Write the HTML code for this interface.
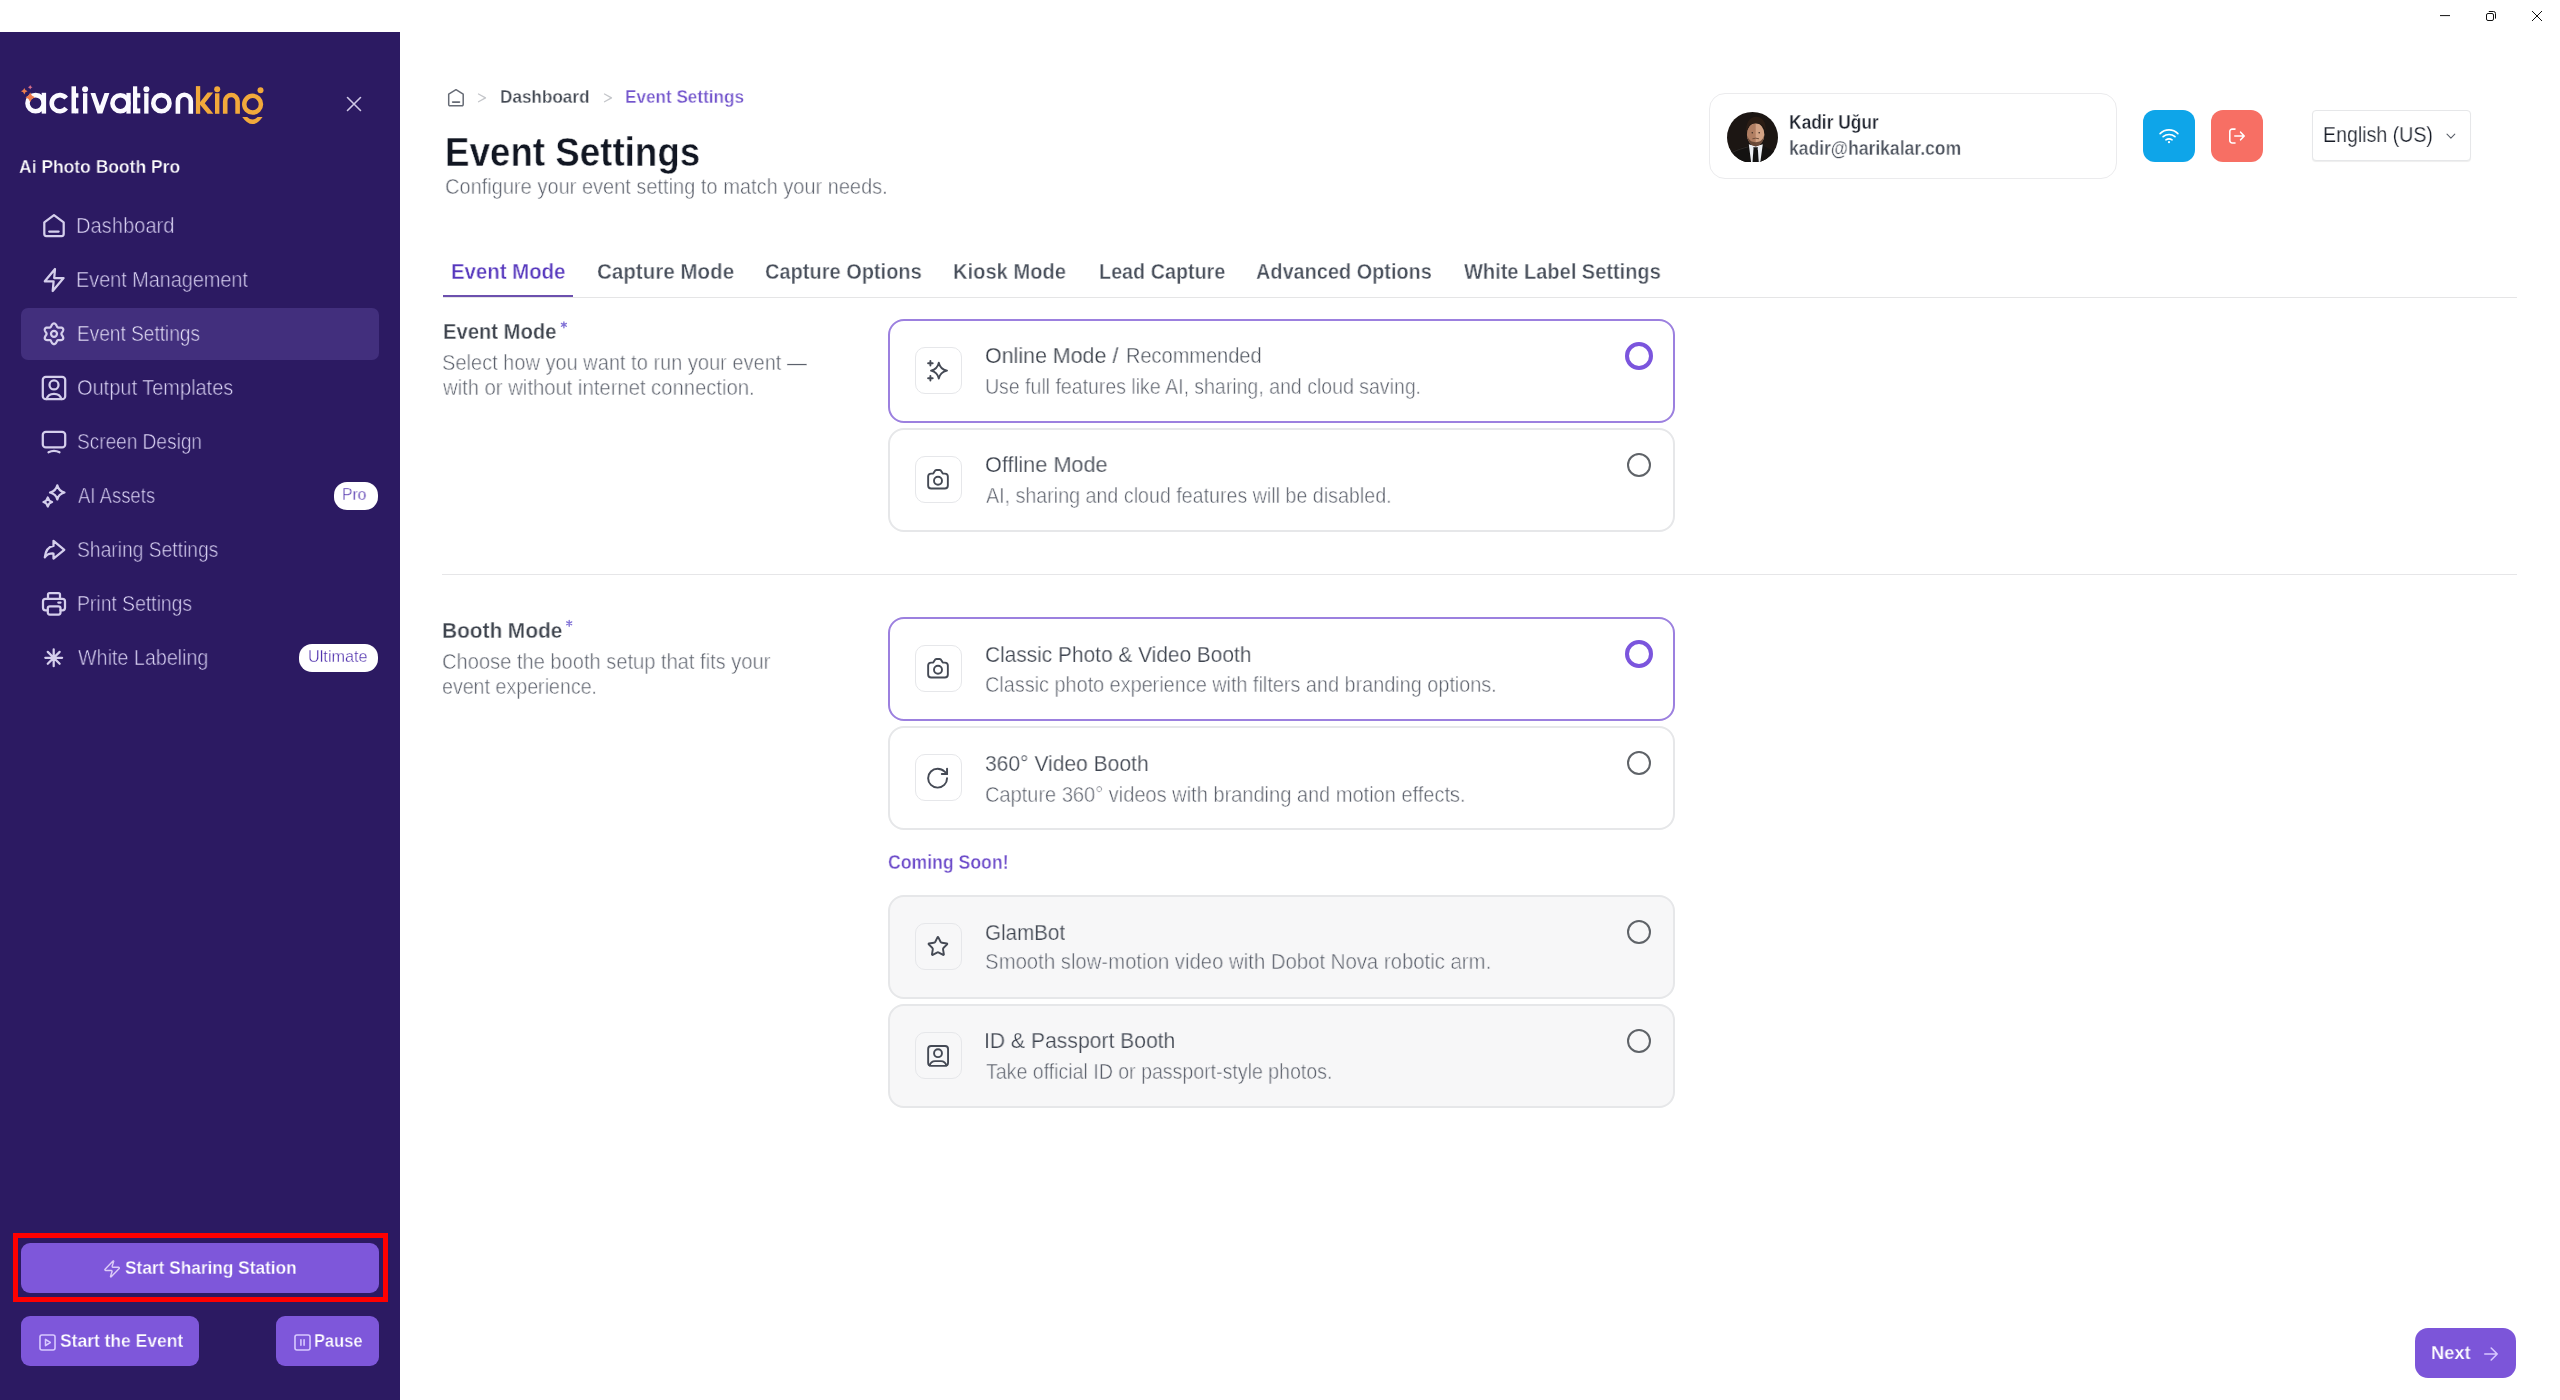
<!DOCTYPE html>
<html><head><meta charset="utf-8"><title>Event Settings</title>
<style>
html,body{margin:0;padding:0;width:2560px;height:1400px;overflow:hidden;background:#fff;}
body{position:relative;font-family:"Liberation Sans",sans-serif;}
.r{position:absolute;display:block;}
.t{position:absolute;white-space:nowrap;transform-origin:0 0;will-change:transform;}
</style></head><body>
<div class="r" style="left:0.0px;top:0.0px;width:2560.0px;height:32.0px;background:#ffffff;border-radius:0.0px;box-sizing:border-box;"></div>
<svg class="r" style="left:2420px;top:0" width="140" height="32" viewBox="2420 0 140 32" fill="none" stroke="#111" stroke-width="1"><path d="M2440 15.6h10"/><rect x="2486.5" y="13.5" width="7" height="7" rx="1.5"/><path d="M2488.8 11.5H2493.5a2 2 0 0 1 2 2V18.6"/><path d="M2532 11l10 10M2542 11l-10 10"/></svg>
<div class="r" style="left:0.0px;top:32.0px;width:400.0px;height:1368.0px;background:#2c1a62;border-radius:0.0px;box-sizing:border-box;"></div>
<div class="r" style="left:21.0px;top:308.0px;width:358.0px;height:52.0px;background:#422f7d;border-radius:7.0px;box-sizing:border-box;"></div>
<div class="r" style="left:334.0px;top:482.0px;width:44.0px;height:28.0px;background:#ffffff;border-radius:13.0px;box-sizing:border-box;"></div>
<div class="r" style="left:299.0px;top:644.0px;width:79.0px;height:28.0px;background:#ffffff;border-radius:13.0px;box-sizing:border-box;"></div>
<svg class="r" style="left:344.0px;top:94.0px;" width="20.0" height="20.0" viewBox="0 0 20 20" fill="none" stroke="#cfc8e6" stroke-width="1.6" stroke-linecap="round" stroke-linejoin="round"><path d="M3.5 3.5l13 13M16.5 3.5l-13 13"/></svg>
<div class="r" style="left:13.2px;top:1233.1px;width:374.4px;height:69.2px;background:transparent;border:5.6px solid #ff0000;border-radius:0.0px;box-sizing:border-box;"></div>
<div class="r" style="left:21.0px;top:1243.0px;width:358.0px;height:50.0px;background:#7e57da;border-radius:9.0px;box-sizing:border-box;"></div>
<div class="r" style="left:21.0px;top:1316.0px;width:178.0px;height:50.0px;background:#7e57da;border-radius:9.0px;box-sizing:border-box;"></div>
<div class="r" style="left:276.0px;top:1316.0px;width:103.0px;height:50.0px;background:#7e57da;border-radius:9.0px;box-sizing:border-box;"></div>
<svg class="r" style="left:0;top:0" width="400" height="700" viewBox="0 0 400 700" fill="none" stroke="#d5cfec" stroke-width="2.25" stroke-linecap="round" stroke-linejoin="round"><path d="M44.3 222.3L54 215.2l9.7 7.1V234a2 2 0 0 1-2 2H46.3a2 2 0 0 1-2-2z"/><path d="M49.2 231.5h9.4"/><path d="M55 269L44.8 281.3h8.8L52.7 291l10.9-13h-9.4z"/><path d="M61.40 333.80 L61.46 334.19 L61.64 334.60 L61.92 335.05 L62.25 335.55 L62.60 336.10 L62.91 336.69 L63.13 337.31 L63.24 337.91 L63.20 338.49 L63.01 339.00 L62.66 339.42 L62.18 339.74 L61.60 339.96 L60.96 340.07 L60.29 340.09 L59.65 340.07 L59.05 340.03 L58.52 340.02 L58.07 340.07 L57.70 340.21 L57.39 340.46 L57.13 340.82 L56.87 341.29 L56.61 341.82 L56.30 342.40 L55.95 342.96 L55.53 343.46 L55.06 343.86 L54.54 344.11 L54.00 344.20 L53.46 344.11 L52.94 343.86 L52.47 343.46 L52.05 342.96 L51.70 342.40 L51.39 341.82 L51.13 341.29 L50.87 340.82 L50.61 340.46 L50.30 340.21 L49.93 340.07 L49.48 340.02 L48.95 340.03 L48.35 340.07 L47.71 340.09 L47.04 340.07 L46.40 339.96 L45.82 339.74 L45.34 339.42 L44.99 339.00 L44.80 338.49 L44.76 337.91 L44.87 337.31 L45.09 336.69 L45.40 336.10 L45.75 335.55 L46.08 335.05 L46.36 334.60 L46.54 334.19 L46.60 333.80 L46.54 333.41 L46.36 333.00 L46.08 332.55 L45.75 332.05 L45.40 331.50 L45.09 330.91 L44.87 330.29 L44.76 329.69 L44.80 329.11 L44.99 328.60 L45.34 328.18 L45.82 327.86 L46.40 327.64 L47.04 327.53 L47.71 327.51 L48.35 327.53 L48.95 327.57 L49.48 327.58 L49.93 327.53 L50.30 327.39 L50.61 327.14 L50.87 326.78 L51.13 326.31 L51.39 325.78 L51.70 325.20 L52.05 324.64 L52.47 324.14 L52.94 323.74 L53.46 323.49 L54.00 323.40 L54.54 323.49 L55.06 323.74 L55.53 324.14 L55.95 324.64 L56.30 325.20 L56.61 325.78 L56.87 326.31 L57.13 326.78 L57.39 327.14 L57.70 327.39 L58.07 327.53 L58.52 327.58 L59.05 327.57 L59.65 327.53 L60.29 327.51 L60.96 327.53 L61.60 327.64 L62.18 327.86 L62.66 328.18 L63.01 328.60 L63.20 329.11 L63.24 329.69 L63.13 330.29 L62.91 330.91 L62.60 331.50 L62.25 332.05 L61.92 332.55 L61.64 333.00 L61.46 333.41Z"/><circle cx="54" cy="333.8" r="3"/><rect x="42.8" y="376.8" width="22.4" height="22.4" rx="3"/><circle cx="54" cy="384.9" r="4.5"/><path d="M46.6 399c.9-3.4 3.9-5.2 7.4-5.2s6.5 1.8 7.4 5.2"/><rect x="42.8" y="431.8" width="22.4" height="15.6" rx="3"/><path d="M48.5 452.3q5.5-2.8 11 0"/><path d="M57.3 485.3q1.2 5.6 7.2 7.2-6 1.6-7.2 6.9-1.2-5.3-7.3-6.9 6.1-1.6 7.3-7.2z"/><path d="M47.8 497.5q.9 3.6 4.3 4.5-3.4.9-4.3 4.5-.9-3.6-4.3-4.5 3.4-.9 4.3-4.5z"/><path d="M53.5 540.8l10.8 9-10.8 8.8v-5.1c-4.5-.2-7 1.5-8.7 3.8.7-6.8 3.7-10.5 8.7-11.4z"/><path d="M48 598v-3.5a1.5 1.5 0 0 1 1.5-1.5h9a1.5 1.5 0 0 1 1.5 1.5V598"/><path d="M47.5 610.3h-2a2.5 2.5 0 0 1-2.5-2.5v-6.4a2.5 2.5 0 0 1 2.5-2.5h17a2.5 2.5 0 0 1 2.5 2.5v6.4a2.5 2.5 0 0 1-2.5 2.5h-2"/><rect x="47.8" y="606.3" width="12.7" height="8.3" rx="2"/><path d="M58.3 602.5h2.2"/><path d="M45.30 657.80L62.10 657.80M47.76 651.86L59.64 663.74M53.70 649.40L53.70 666.20M59.64 651.86L47.76 663.74"/></svg>
<svg class="r" style="left:0;top:0" width="280" height="140" viewBox="0 0 280 140"><g fill="#fbfaff" stroke="#fbfaff"><circle cx="35.60" cy="103.20" r="8.10" fill="none" stroke-width="4.60"/><rect x="41.70" y="92.80" width="4.40" height="20.80" rx="0.00" stroke="none"/><path d="M66.2 98.2A8.1 8.1 0 1 0 66.2 108.2" fill="none" stroke-width="4.60"/><rect x="71.50" y="86.30" width="4.50" height="27.10" rx="0.00" stroke="none"/><rect x="75.50" y="93.20" width="2.90" height="4.40" rx="0.00" stroke="none"/><path d="M75.50 108.4h2.90v5h-2.90z" stroke="none"/><circle cx="85.10" cy="89.20" r="3.00" stroke="none"/><rect x="83.00" y="93.30" width="4.30" height="20.30" rx="0.00" stroke="none"/><path d="M90.5 92.9h4.8l4.6 13.2 4.6-13.2h4.9l-7 20.7h-4.9z" stroke="none"/><circle cx="120.40" cy="103.20" r="8.00" fill="none" stroke-width="4.60"/><rect x="126.40" y="92.90" width="4.30" height="20.70" rx="0.00" stroke="none"/><rect x="133.00" y="86.30" width="4.20" height="27.10" rx="0.00" stroke="none"/><rect x="136.70" y="93.20" width="3.60" height="4.40" rx="0.00" stroke="none"/><path d="M136.70 108.4h3.60v5h-3.60z" stroke="none"/><circle cx="146.40" cy="89.20" r="3.00" stroke="none"/><rect x="144.20" y="93.30" width="4.30" height="20.30" rx="0.00" stroke="none"/><circle cx="161.40" cy="103.20" r="8.10" fill="none" stroke-width="4.60"/><path d="M177.9 113.8V101.2a6.45 6.45 0 0 1 12.9 0V113.8" fill="none" stroke-width="4.6"/></g><g fill="#f2a93b" stroke="#f2a93b"><rect x="195.90" y="86.10" width="4.30" height="27.70" rx="0.00" stroke="none"/><path d="M199 103.5l8.6-11.1h5.6l-8.4 10.8 8.6 10.6h-5.8l-7.9-9.6z" stroke="none"/><circle cx="217.20" cy="89.20" r="3.00" stroke="none"/><rect x="215.00" y="93.30" width="4.40" height="20.50" rx="0.00" stroke="none"/><path d="M225.2 113.8V101.2a6.2 6.2 0 0 1 12.4 0V113.8" fill="none" stroke-width="4.6"/><circle cx="252.60" cy="104.20" r="8.35" fill="none" stroke-width="4.50"/><circle cx="260.50" cy="90.30" r="3.00" stroke="none"/><path d="M242.2 116.9H247.2Q252.5 122.2 257.6 116.9H262.6Q252.4 131.2 242.2 116.9Z" stroke="none"/></g><path d="M30.2 92.6l1.7 3 3 1.7-3 1.7-1.7 3-1.7-3-3-1.7 3-1.7z" fill="#ee7a4c" stroke="none"/><path d="M24.3 87.9l1.1 2.2 2.2 1.1-2.2 1.1-1.1 2.2-1.1-2.2-2.2-1.1 2.2-1.1z" fill="#ee7f4e" stroke="none"/><path d="M30.2 84.9l.8 1.5 1.5.8-1.5.8-.8 1.5-.8-1.5-1.5-.8 1.5-.8z" fill="#d8708a" stroke="none"/></svg>
<svg class="r" style="left:0;top:1200px" width="400" height="200" viewBox="0 1200 400 200" fill="none" stroke="#dccbf7" stroke-width="1.45" stroke-linecap="round" stroke-linejoin="round"><g transform="translate(102.5 1259.3) scale(0.8)" stroke-width="1.8"><path d="M4 14a1 1 0 0 1-.78-1.63l9.9-10.2a.5.5 0 0 1 .86.46l-1.92 6.02A1 1 0 0 0 13 10h7a1 1 0 0 1 .78 1.63l-9.9 10.2a.5.5 0 0 1-.86-.46l1.92-6.02A1 1 0 0 0 11 14z"/></g></svg>
<svg class="r" style="left:38.0px;top:1333.0px;" width="19.0" height="19.0" viewBox="0 0 24 24" fill="none" stroke="#d8c9ff" stroke-width="2" stroke-linecap="round" stroke-linejoin="round"><rect x="2.5" y="2.5" width="19" height="19" rx="2.5"/><path d="M9.5 8v8l6-4z"/></svg>
<svg class="r" style="left:293.0px;top:1333.0px;" width="19.0" height="19.0" viewBox="0 0 24 24" fill="none" stroke="#d8c9ff" stroke-width="2" stroke-linecap="round" stroke-linejoin="round"><rect x="2.5" y="2.5" width="19" height="19" rx="2.5"/><path d="M10 8.5v7M14 8.5v7"/></svg>
<svg class="r" style="left:440px;top:84px" width="180" height="28" viewBox="0 0 180 28" fill="none" stroke-linecap="round" stroke-linejoin="round"><path d="M8.7 10.2L16 5.7l7.2 4.5V20.6a1.2 1.2 0 0 1-1.2 1.2H9.9a1.2 1.2 0 0 1-1.2-1.2z" stroke="#666b75" stroke-width="1.5"/><path d="M12.6 18.1h6.9" stroke="#666b75" stroke-width="1.6"/><path d="M38.5 10l7 3.9-7 3.9" stroke="#c4c6ca" stroke-width="1.3"/><path d="M164.5 10l7 3.9-7 3.9" stroke="#c4c6ca" stroke-width="1.3"/></svg>
<div class="r" style="left:443.0px;top:297.0px;width:2074.0px;height:1.0px;background:#e5e5e6;border-radius:0.0px;box-sizing:border-box;"></div>
<div class="r" style="left:443.0px;top:295.0px;width:130.0px;height:2.0px;background:#6c50ae;border-radius:0.0px;box-sizing:border-box;"></div>
<div class="r" style="left:1708.5px;top:93.0px;width:408.5px;height:86.0px;background:#ffffff;border:1.6px solid #ebebed;border-radius:16.0px;box-sizing:border-box;"></div>
<svg class="r" style="left:1726px;top:111px" width="52" height="50.6" viewBox="0 0 52 50.6"><defs><clipPath id="cc"><circle cx="26.5" cy="26.4" r="25.5"/></clipPath></defs><g clip-path="url(#cc)"><rect width="52" height="52" fill="#1c1613"/><path d="M0 52V43C7 39.5 14 37.5 23 34.5L27 52z" fill="#141211"/><path d="M53 52V43C46 39.5 42 37.5 36.5 34.5L32.5 52z" fill="#141211"/><path d="M6 41.5C12 38.6 17 37.2 22.5 35.8" stroke="#3a3431" stroke-width=".7" fill="none"/><path d="M25.5 29.5h8.5v6h-8.5z" fill="#b0806a"/><path d="M22.8 33.2L29.7 35.4 36.8 33.2 34.2 52H25.2z" fill="#edf0f4"/><path d="M27.4 38.6h4.5l.9 13.4h-6.3z" fill="#121212"/><path d="M27.2 36.3h4.8l-.6 2.6h-3.6z" fill="#181818"/><ellipse cx="29.7" cy="23.4" rx="8.7" ry="11.2" fill="#d3a385"/><path d="M21 23.4C21 29.6 24.9 34.6 29.7 34.6V12.2C24.9 12.2 21 17.2 21 23.4z" fill="#a47257" opacity=".75"/><path d="M21.3 24.5C21.8 31.5 25.4 35.3 29.7 35.3S37.6 31.5 38.1 24.5C36.6 29.6 33.6 31.2 29.7 31.2S22.8 29.6 21.3 24.5z" fill="#5a3e2f" opacity=".85"/><path d="M26.4 27.8q3.3-1.2 6.6 0" stroke="#6a4a38" stroke-width=".9" fill="none"/><circle cx="26.3" cy="21.8" r=".8" fill="#3a2a22"/><circle cx="33.2" cy="21.8" r=".8" fill="#3a2a22"/><path d="M20.2 21.5C19.6 12.2 23.6 5.8 30 5.8S40.3 11 39.6 20.3C38.6 15.2 35.2 12.3 30 12.3S21.6 15.6 20.2 21.5z" fill="#2b1d15"/></g></svg>
<div class="r" style="left:2143.0px;top:110.0px;width:52.0px;height:52.0px;background:#0ea5e9;border-radius:12.0px;box-sizing:border-box;"></div>
<div class="r" style="left:2211.0px;top:110.0px;width:52.0px;height:52.0px;background:#f76f64;border-radius:12.0px;box-sizing:border-box;"></div>
<svg class="r" style="left:2140px;top:106px" width="130" height="60" viewBox="0 0 130 60" fill="none" stroke="#ffffff" stroke-width="1.6" stroke-linecap="round" stroke-linejoin="round"><path d="M20.1 27.6A12.5 12.5 0 0 1 37.9 27.6"/><path d="M23.1 30.7A9 9 0 0 1 35 30.7"/><path d="M25.9 33.9A5.5 5.5 0 0 1 32.1 33.9"/><circle cx="29" cy="36.2" r="1.1" fill="#fff" stroke="none"/><path d="M95 23.1H92.2A2.4 2.4 0 0 0 89.8 25.5V34.6A2.4 2.4 0 0 0 92.2 37H95"/><path d="M94.8 30H104.1M100.6 26.2L104.2 30L100.6 33.8"/></svg>
<div class="r" style="left:2311.5px;top:110.4px;width:159.0px;height:51.1px;background:#ffffff;border:1px solid #e6e7e9;border-radius:4.0px;box-sizing:border-box;box-shadow:0 1px 1px rgba(0,0,0,0.07)"></div>
<svg class="r" style="left:2440.0px;top:128.0px;" width="20.0" height="14.0" viewBox="0 0 20 14" fill="none" stroke="#5a5f68" stroke-width="1.1" stroke-linecap="round" stroke-linejoin="round"><path d="M7 6.2l3.9 3.9 3.9-3.9"/></svg>
<div class="r" style="left:442.0px;top:574.0px;width:2075.0px;height:1.0px;background:#e6e6e8;border-radius:0.0px;box-sizing:border-box;"></div>
<div class="r" style="left:888.0px;top:319.0px;width:787.0px;height:104.0px;background:#ffffff;border:2.5px solid #9c80df;border-radius:16.0px;box-sizing:border-box;"></div>
<div class="r" style="left:914.5px;top:347.0px;width:47.0px;height:47.0px;background:transparent;border:1.5px solid #e6e7ea;border-radius:10.0px;box-sizing:border-box;"></div>
<div class="r" style="left:1625.1px;top:342.1px;width:27.8px;height:27.8px;background:transparent;border:4.9px solid #7b55dd;border-radius:14.0px;box-sizing:border-box;"></div>
<div class="r" style="left:888.0px;top:428.0px;width:787.0px;height:104.0px;background:#ffffff;border:2px solid #e6e7e9;border-radius:16.0px;box-sizing:border-box;"></div>
<div class="r" style="left:914.5px;top:456.0px;width:47.0px;height:47.0px;background:transparent;border:1.5px solid #e6e7ea;border-radius:10.0px;box-sizing:border-box;"></div>
<div class="r" style="left:1626.7px;top:452.6px;width:24.7px;height:24.7px;background:transparent;border:2.1px solid #5f6368;border-radius:13.0px;box-sizing:border-box;"></div>
<div class="r" style="left:888.0px;top:617.0px;width:787.0px;height:104.0px;background:#ffffff;border:2.5px solid #9c80df;border-radius:16.0px;box-sizing:border-box;"></div>
<div class="r" style="left:914.5px;top:645.0px;width:47.0px;height:47.0px;background:transparent;border:1.5px solid #e6e7ea;border-radius:10.0px;box-sizing:border-box;"></div>
<div class="r" style="left:1625.1px;top:640.1px;width:27.8px;height:27.8px;background:transparent;border:4.9px solid #7b55dd;border-radius:14.0px;box-sizing:border-box;"></div>
<div class="r" style="left:888.0px;top:726.0px;width:787.0px;height:104.0px;background:#ffffff;border:2px solid #e6e7e9;border-radius:16.0px;box-sizing:border-box;"></div>
<div class="r" style="left:914.5px;top:754.0px;width:47.0px;height:47.0px;background:transparent;border:1.5px solid #e6e7ea;border-radius:10.0px;box-sizing:border-box;"></div>
<div class="r" style="left:1626.7px;top:750.6px;width:24.7px;height:24.7px;background:transparent;border:2.1px solid #5f6368;border-radius:13.0px;box-sizing:border-box;"></div>
<div class="r" style="left:888.0px;top:895.0px;width:787.0px;height:104.0px;background:#f7f7f8;border:2px solid #e6e7e9;border-radius:16.0px;box-sizing:border-box;"></div>
<div class="r" style="left:914.5px;top:923.0px;width:47.0px;height:47.0px;background:transparent;border:1.5px solid #e6e7ea;border-radius:10.0px;box-sizing:border-box;"></div>
<div class="r" style="left:1626.7px;top:919.6px;width:24.7px;height:24.7px;background:transparent;border:2.1px solid #5f6368;border-radius:13.0px;box-sizing:border-box;"></div>
<div class="r" style="left:888.0px;top:1004.0px;width:787.0px;height:104.0px;background:#f7f7f8;border:2px solid #e6e7e9;border-radius:16.0px;box-sizing:border-box;"></div>
<div class="r" style="left:914.5px;top:1032.0px;width:47.0px;height:47.0px;background:transparent;border:1.5px solid #e6e7ea;border-radius:10.0px;box-sizing:border-box;"></div>
<div class="r" style="left:1626.7px;top:1028.7px;width:24.7px;height:24.7px;background:transparent;border:2.1px solid #5f6368;border-radius:13.0px;box-sizing:border-box;"></div>
<svg class="r" style="left:910.0px;top:342.0px;" width="56.0" height="56.0" viewBox="0 0 56 56" fill="none" stroke="#454a55" stroke-width="1.9" stroke-linecap="round" stroke-linejoin="round"><path d="M28.8 20.6q1.3 6.6 8.2 8-6.9 1.4-8.2 8-1.3-6.6-7.8-8 6.5-1.4 7.8-8z"/><path d="M20.4 18.9v4.6M18.1 21.2h4.6M20.4 33.9v4.6M18.1 36.2h4.6"/></svg>
<svg class="r" style="left:910.0px;top:451.0px;" width="56.0" height="56.0" viewBox="0 0 56 56" fill="none" stroke="#454a55" stroke-width="1.9" stroke-linecap="round" stroke-linejoin="round"><path d="M18.15 25.6a3 3 0 0 1 3-3h2.1l1.4-2.4a2.2 2.2 0 0 1 1.8-1.2h3.1a2.2 2.2 0 0 1 1.8 1.2l1.4 2.4h2.1a3 3 0 0 1 3 3v8.9a3 3 0 0 1-3 3H21.15a3 3 0 0 1-3-3z"/><circle cx="28" cy="29.7" r="4"/></svg>
<svg class="r" style="left:910.0px;top:640.0px;" width="56.0" height="56.0" viewBox="0 0 56 56" fill="none" stroke="#454a55" stroke-width="1.9" stroke-linecap="round" stroke-linejoin="round"><path d="M18.15 25.6a3 3 0 0 1 3-3h2.1l1.4-2.4a2.2 2.2 0 0 1 1.8-1.2h3.1a2.2 2.2 0 0 1 1.8 1.2l1.4 2.4h2.1a3 3 0 0 1 3 3v8.9a3 3 0 0 1-3 3H21.15a3 3 0 0 1-3-3z"/><circle cx="28" cy="29.7" r="4"/></svg>
<svg class="r" style="left:910.0px;top:749.0px;" width="56.0" height="56.0" viewBox="0 0 56 56" fill="none" stroke="#454a55" stroke-width="1.9" stroke-linecap="round" stroke-linejoin="round"><g transform="translate(15.0 16.6) scale(1.05)" stroke-width="1.85"><path d="M21 12a9 9 0 1 1-9-9c2.52 0 4.93 1 6.74 2.74L21 8"/><path d="M21 3v5h-5"/></g></svg>
<svg class="r" style="left:910.0px;top:918.0px;" width="56.0" height="56.0" viewBox="0 0 56 56" fill="none" stroke="#454a55" stroke-width="1.9" stroke-linecap="round" stroke-linejoin="round"><g transform="translate(16.7 17.2) scale(0.935)" stroke-width="2.05"><path d="M11.525 2.295a.53.53 0 0 1 .95 0l2.31 4.679a2.123 2.123 0 0 0 1.595 1.16l5.166.756a.53.53 0 0 1 .294.904l-3.736 3.638a2.123 2.123 0 0 0-.611 1.878l.882 5.14a.53.53 0 0 1-.771.56l-4.618-2.428a2.122 2.122 0 0 0-1.973 0L6.396 21.01a.53.53 0 0 1-.77-.56l.881-5.139a2.122 2.122 0 0 0-.611-1.879L2.16 9.795a.53.53 0 0 1 .294-.906l5.165-.755a2.122 2.122 0 0 0 1.597-1.16z"/></g></svg>
<svg class="r" style="left:910.0px;top:1027.0px;" width="56.0" height="56.0" viewBox="0 0 56 56" fill="none" stroke="#454a55" stroke-width="1.9" stroke-linecap="round" stroke-linejoin="round"><rect x="18.15" y="18.95" width="19.9" height="19.9" rx="3"/><circle cx="28" cy="26.2" r="3.95"/><path d="M19.6 38.4c1-3 3-4.3 5.4-4.3h6c2.4 0 4.4 1.3 5.4 4.3"/></svg>
<svg class="r" style="left:0;top:0" width="700" height="700" viewBox="0 0 700 700" fill="none" stroke="#8273d6" stroke-width="1.35" stroke-linecap="round"><path d="M563.90 321.90L563.90 327.70M566.41 323.35L561.39 326.25M566.41 326.25L561.39 323.35"/></svg>
<svg class="r" style="left:0;top:0" width="700" height="700" viewBox="0 0 700 700" fill="none" stroke="#8273d6" stroke-width="1.35" stroke-linecap="round"><path d="M569.20 620.40L569.20 626.20M571.71 621.85L566.69 624.75M571.71 624.75L566.69 621.85"/></svg>
<div class="r" style="left:2415.0px;top:1328.0px;width:101.0px;height:50.0px;background:#7c55d9;border-radius:13.0px;box-sizing:border-box;"></div>
<svg class="r" style="left:2470px;top:1340px" width="40" height="30" viewBox="2470 1340 40 30" fill="none" stroke="#d8c8ff" stroke-width="1.6" stroke-linecap="round" stroke-linejoin="round"><path d="M2484.8 1354h12.4M2491.2 1348l6 6-6 6"/></svg>
<div id="aipb" class="t" style="left:19.00px;top:158.01px;font-size:18.90px;line-height:18.90px;font-weight:700;color:#ffffff;letter-spacing:0.000px;transform:scaleX(0.9249);-webkit-text-stroke:0.35px #2c1a62;">Ai Photo Booth Pro</div>
<div id="menu0" class="t" style="left:75.50px;top:214.54px;font-size:21.80px;line-height:21.80px;font-weight:400;color:#dcd5f5;letter-spacing:0.000px;transform:scaleX(0.9232);-webkit-text-stroke:0.55px #2c1a62;">Dashboard</div>
<div id="menu1" class="t" style="left:75.50px;top:268.54px;font-size:21.80px;line-height:21.80px;font-weight:400;color:#dcd5f5;letter-spacing:0.000px;transform:scaleX(0.9096);-webkit-text-stroke:0.55px #2c1a62;">Event Management</div>
<div id="menu2" class="t" style="left:76.50px;top:322.54px;font-size:21.80px;line-height:21.80px;font-weight:400;color:#e6e1f8;letter-spacing:0.000px;transform:scaleX(0.8748);-webkit-text-stroke:0.55px #422f7d;">Event Settings</div>
<div id="menu3" class="t" style="left:76.50px;top:376.54px;font-size:21.80px;line-height:21.80px;font-weight:400;color:#dcd5f5;letter-spacing:0.000px;transform:scaleX(0.9172);-webkit-text-stroke:0.55px #2c1a62;">Output Templates</div>
<div id="menu4" class="t" style="left:76.50px;top:430.54px;font-size:21.80px;line-height:21.80px;font-weight:400;color:#dcd5f5;letter-spacing:0.000px;transform:scaleX(0.8743);-webkit-text-stroke:0.55px #2c1a62;">Screen Design</div>
<div id="menu5" class="t" style="left:77.50px;top:484.54px;font-size:21.80px;line-height:21.80px;font-weight:400;color:#dcd5f5;letter-spacing:0.000px;transform:scaleX(0.8490);-webkit-text-stroke:0.55px #2c1a62;">AI Assets</div>
<div id="menu6" class="t" style="left:76.50px;top:538.54px;font-size:21.80px;line-height:21.80px;font-weight:400;color:#dcd5f5;letter-spacing:0.000px;transform:scaleX(0.8835);-webkit-text-stroke:0.55px #2c1a62;">Sharing Settings</div>
<div id="menu7" class="t" style="left:76.50px;top:592.54px;font-size:21.80px;line-height:21.80px;font-weight:400;color:#dcd5f5;letter-spacing:0.000px;transform:scaleX(0.8875);-webkit-text-stroke:0.55px #2c1a62;">Print Settings</div>
<div id="menu8" class="t" style="left:77.50px;top:646.54px;font-size:21.80px;line-height:21.80px;font-weight:400;color:#dcd5f5;letter-spacing:0.000px;transform:scaleX(0.9043);-webkit-text-stroke:0.55px #2c1a62;">White Labeling</div>
<div id="pro" class="t" style="left:342.00px;top:487.47px;font-size:15.99px;line-height:15.99px;font-weight:400;color:#4f30ad;letter-spacing:0.000px;transform:scaleX(0.9746);-webkit-text-stroke:0.3px #fff;">Pro</div>
<div id="ult" class="t" style="left:308.00px;top:649.47px;font-size:15.99px;line-height:15.99px;font-weight:400;color:#4f30ad;letter-spacing:0.000px;transform:scaleX(1.0175);-webkit-text-stroke:0.3px #fff;">Ultimate</div>
<div id="bss" class="t" style="left:125.00px;top:1259.01px;font-size:18.90px;line-height:18.90px;font-weight:700;color:#ffffff;letter-spacing:0.000px;transform:scaleX(0.9140);-webkit-text-stroke:0.3px #7b55d8;">Start Sharing Station</div>
<div id="bse" class="t" style="left:60.00px;top:1332.01px;font-size:18.90px;line-height:18.90px;font-weight:700;color:#ffffff;letter-spacing:0.000px;transform:scaleX(0.9242);-webkit-text-stroke:0.3px #7b55d8;">Start the Event</div>
<div id="bpa" class="t" style="left:314.00px;top:1332.01px;font-size:18.90px;line-height:18.90px;font-weight:700;color:#ffffff;letter-spacing:0.000px;transform:scaleX(0.8706);-webkit-text-stroke:0.3px #7b55d8;">Pause</div>
<div id="bc1" class="t" style="left:500.00px;top:87.70px;font-size:18.31px;line-height:18.31px;font-weight:700;color:#434953;letter-spacing:0.000px;transform:scaleX(0.9362);-webkit-text-stroke:0.35px #fff;">Dashboard</div>
<div id="bc2" class="t" style="left:624.50px;top:87.70px;font-size:18.31px;line-height:18.31px;font-weight:700;color:#7254cc;letter-spacing:0.000px;transform:scaleX(0.9360);-webkit-text-stroke:0.35px #fff;">Event Settings</div>
<div id="title" class="t" style="left:445.00px;top:131.55px;font-size:40.70px;line-height:40.70px;font-weight:700;color:#111622;letter-spacing:0.000px;transform:scaleX(0.9029);-webkit-text-stroke:0.5px #fff;">Event Settings</div>
<div id="sub" class="t" style="left:445.00px;top:175.93px;font-size:22.53px;line-height:22.53px;font-weight:400;color:#5c616c;letter-spacing:0.000px;transform:scaleX(0.8889);-webkit-text-stroke:0.5px #fff;">Configure your event setting to match your needs.</div>
<div id="tab0" class="t" style="left:450.50px;top:261.79px;font-size:21.51px;line-height:21.51px;font-weight:700;color:#5536bd;letter-spacing:0.000px;transform:scaleX(0.9479);-webkit-text-stroke:0.4px #fff;">Event Mode</div>
<div id="tab1" class="t" style="left:597.00px;top:261.79px;font-size:21.51px;line-height:21.51px;font-weight:700;color:#474e5a;letter-spacing:0.000px;transform:scaleX(0.9564);-webkit-text-stroke:0.4px #fff;">Capture Mode</div>
<div id="tab2" class="t" style="left:765.00px;top:261.79px;font-size:21.51px;line-height:21.51px;font-weight:700;color:#474e5a;letter-spacing:0.000px;transform:scaleX(0.9305);-webkit-text-stroke:0.4px #fff;">Capture Options</div>
<div id="tab3" class="t" style="left:953.00px;top:261.79px;font-size:21.51px;line-height:21.51px;font-weight:700;color:#474e5a;letter-spacing:0.000px;transform:scaleX(0.9362);-webkit-text-stroke:0.4px #fff;">Kiosk Mode</div>
<div id="tab4" class="t" style="left:1099.00px;top:261.79px;font-size:21.51px;line-height:21.51px;font-weight:700;color:#474e5a;letter-spacing:0.000px;transform:scaleX(0.9191);-webkit-text-stroke:0.4px #fff;">Lead Capture</div>
<div id="tab5" class="t" style="left:1256.00px;top:261.79px;font-size:21.51px;line-height:21.51px;font-weight:700;color:#474e5a;letter-spacing:0.000px;transform:scaleX(0.9255);-webkit-text-stroke:0.4px #fff;">Advanced Options</div>
<div id="tab6" class="t" style="left:1464.00px;top:261.79px;font-size:21.51px;line-height:21.51px;font-weight:700;color:#474e5a;letter-spacing:0.000px;transform:scaleX(0.9308);-webkit-text-stroke:0.4px #fff;">White Label Settings</div>
<div id="kname" class="t" style="left:1789.00px;top:113.14px;font-size:19.91px;line-height:19.91px;font-weight:700;color:#1d222d;letter-spacing:0.000px;transform:scaleX(0.8725);-webkit-text-stroke:0.35px #fff;">Kadir Uğur</div>
<div id="kmail" class="t" style="left:1789.00px;top:139.14px;font-size:19.91px;line-height:19.91px;font-weight:700;color:#4b515c;letter-spacing:0.000px;transform:scaleX(0.8808);-webkit-text-stroke:0.35px #fff;">kadir@harikalar.com</div>
<div id="lang" class="t" style="left:2323.00px;top:124.04px;font-size:21.22px;line-height:21.22px;font-weight:400;color:#161b26;letter-spacing:0.000px;transform:scaleX(0.9224);-webkit-text-stroke:0.25px #fff;">English (US)</div>
<div id="lbl1" class="t" style="left:442.50px;top:322.11px;font-size:21.37px;line-height:21.37px;font-weight:700;color:#3d434d;letter-spacing:0.000px;transform:scaleX(0.9458);-webkit-text-stroke:0.35px #fff;">Event Mode</div>
<div id="d1a" class="t" style="left:442.00px;top:352.02px;font-size:21.95px;line-height:21.95px;font-weight:400;color:#5c616c;letter-spacing:0.000px;transform:scaleX(0.9123);-webkit-text-stroke:0.5px #fff;">Select how you want to run your event —</div>
<div id="d1b" class="t" style="left:443.00px;top:376.62px;font-size:21.95px;line-height:21.95px;font-weight:400;color:#5c616c;letter-spacing:0.000px;transform:scaleX(0.9226);-webkit-text-stroke:0.5px #fff;">with or without internet connection.</div>
<div id="lbl2" class="t" style="left:441.50px;top:620.91px;font-size:21.37px;line-height:21.37px;font-weight:700;color:#3d434d;letter-spacing:0.000px;transform:scaleX(0.9752);-webkit-text-stroke:0.35px #fff;">Booth Mode</div>
<div id="d2a" class="t" style="left:441.50px;top:651.42px;font-size:21.95px;line-height:21.95px;font-weight:400;color:#5c616c;letter-spacing:0.000px;transform:scaleX(0.9160);-webkit-text-stroke:0.5px #fff;">Choose the booth setup that fits your</div>
<div id="d2b" class="t" style="left:441.50px;top:676.42px;font-size:21.95px;line-height:21.95px;font-weight:400;color:#5c616c;letter-spacing:0.000px;transform:scaleX(0.8948);-webkit-text-stroke:0.5px #fff;">event experience.</div>
<div id="ct0" class="t" style="left:984.50px;top:344.74px;font-size:21.80px;line-height:21.80px;font-weight:400;color:#3c424c;letter-spacing:0.000px;transform:scaleX(0.9822);-webkit-text-stroke:0.25px #fff;">Online Mode /</div>
<div id="ct0b" class="t" style="left:1126.00px;top:344.74px;font-size:21.80px;line-height:21.80px;font-weight:400;color:#4d535d;letter-spacing:0.000px;transform:scaleX(0.9173);-webkit-text-stroke:0.45px #fff;">Recommended</div>
<div id="cd0" class="t" style="left:984.50px;top:376.22px;font-size:21.95px;line-height:21.95px;font-weight:400;color:#595e69;letter-spacing:0.000px;transform:scaleX(0.8895);-webkit-text-stroke:0.5px #fff;">Use full features like AI, sharing, and cloud saving.</div>
<div id="ct1" class="t" style="left:984.50px;top:454.14px;font-size:21.80px;line-height:21.80px;font-weight:400;color:#3f4550;letter-spacing:0.000px;transform:scaleX(0.9951);-webkit-text-stroke:0.25px #fff;">Offline Mode</div>
<div id="cd1" class="t" style="left:985.50px;top:485.42px;font-size:21.95px;line-height:21.95px;font-weight:400;color:#595e69;letter-spacing:0.000px;transform:scaleX(0.8964);-webkit-text-stroke:0.5px #fff;">AI, sharing and cloud features will be disabled.</div>
<div id="ct2" class="t" style="left:984.50px;top:643.54px;font-size:21.80px;line-height:21.80px;font-weight:400;color:#3f4550;letter-spacing:0.000px;transform:scaleX(0.9573);-webkit-text-stroke:0.25px #fff;">Classic Photo &amp; Video Booth</div>
<div id="cd2" class="t" style="left:984.50px;top:674.42px;font-size:21.95px;line-height:21.95px;font-weight:400;color:#595e69;letter-spacing:0.000px;transform:scaleX(0.9044);-webkit-text-stroke:0.5px #fff;">Classic photo experience with filters and branding options.</div>
<div id="ct3" class="t" style="left:984.50px;top:752.54px;font-size:21.80px;line-height:21.80px;font-weight:400;color:#3f4550;letter-spacing:0.000px;transform:scaleX(0.9653);-webkit-text-stroke:0.25px #fff;">360° Video Booth</div>
<div id="cd3" class="t" style="left:984.50px;top:784.42px;font-size:21.95px;line-height:21.95px;font-weight:400;color:#595e69;letter-spacing:0.000px;transform:scaleX(0.9126);-webkit-text-stroke:0.5px #fff;">Capture 360° videos with branding and motion effects.</div>
<div id="ct4" class="t" style="left:984.50px;top:921.74px;font-size:21.80px;line-height:21.80px;font-weight:400;color:#3f4550;letter-spacing:0.000px;transform:scaleX(0.9452);-webkit-text-stroke:0.25px #f7f7f8;">GlamBot</div>
<div id="cd4" class="t" style="left:984.50px;top:951.22px;font-size:21.95px;line-height:21.95px;font-weight:400;color:#595e69;letter-spacing:0.000px;transform:scaleX(0.9267);-webkit-text-stroke:0.5px #f7f7f8;">Smooth slow-motion video with Dobot Nova robotic arm.</div>
<div id="ct5" class="t" style="left:983.50px;top:1030.34px;font-size:21.80px;line-height:21.80px;font-weight:400;color:#3f4550;letter-spacing:0.000px;transform:scaleX(0.9691);-webkit-text-stroke:0.25px #f7f7f8;">ID &amp; Passport Booth</div>
<div id="cd5" class="t" style="left:985.50px;top:1060.82px;font-size:21.95px;line-height:21.95px;font-weight:400;color:#595e69;letter-spacing:0.000px;transform:scaleX(0.8915);-webkit-text-stroke:0.5px #f7f7f8;">Take official ID or passport-style photos.</div>
<div id="soon" class="t" style="left:887.50px;top:851.77px;font-size:20.35px;line-height:20.35px;font-weight:700;color:#6d4cca;letter-spacing:0.000px;transform:scaleX(0.8672);-webkit-text-stroke:0.35px #fff;">Coming Soon!</div>
<div id="next" class="t" style="left:2431.00px;top:1344.01px;font-size:18.90px;line-height:18.90px;font-weight:700;color:#ffffff;letter-spacing:0.000px;transform:scaleX(0.9650);-webkit-text-stroke:0.25px #7c55d9;">Next</div>
</body></html>
